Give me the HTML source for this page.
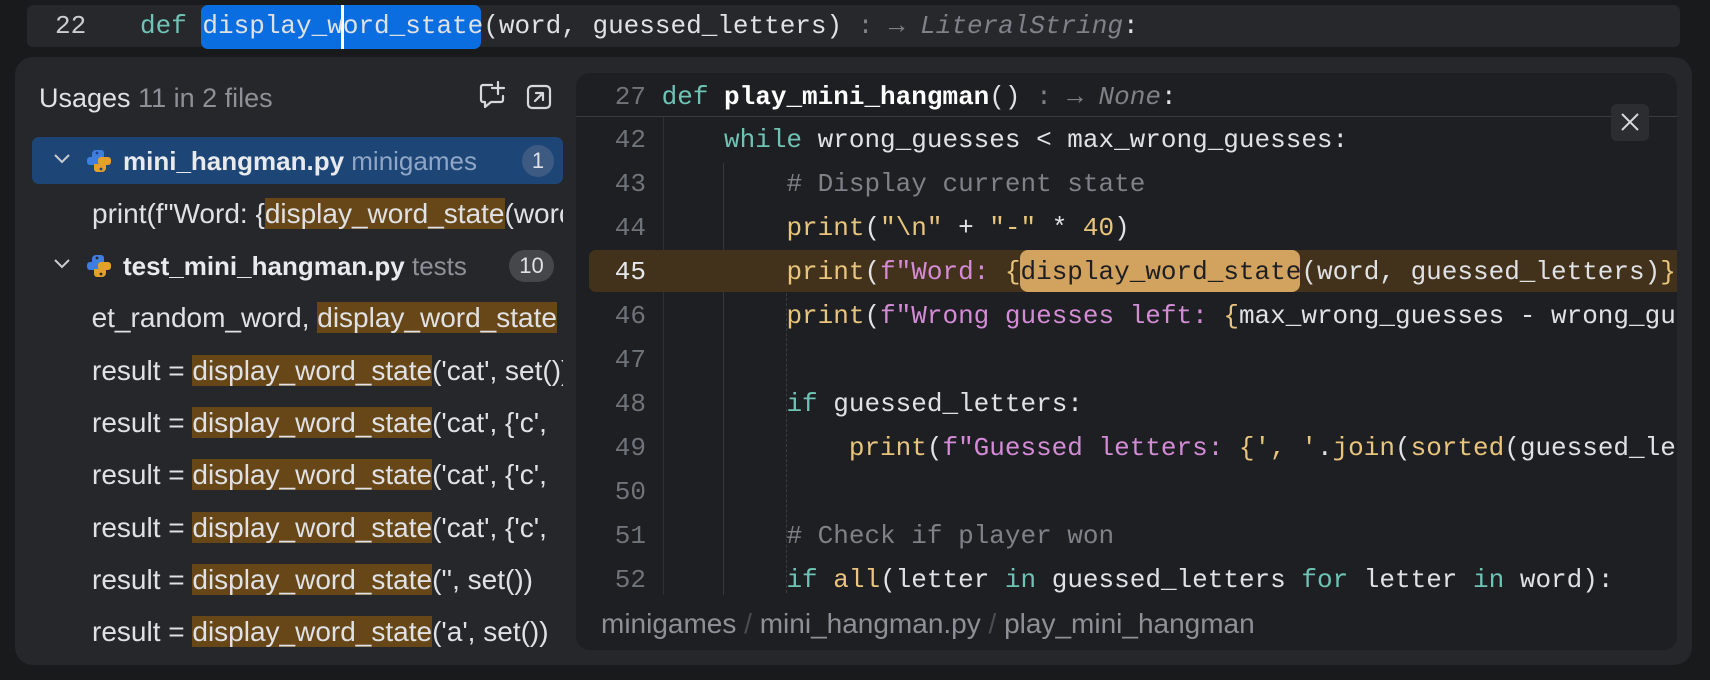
<!DOCTYPE html>
<html><head><meta charset="utf-8"><style>
*{margin:0;padding:0;box-sizing:border-box}
body{width:1710px;height:680px;background:#191a1c;position:relative;overflow:hidden;font-family:"Liberation Sans",sans-serif;color:#dfe1e5}
.a{position:absolute;white-space:pre}
.mono{font-family:"Liberation Mono",monospace;font-size:26px}
.sans{font-family:"Liberation Sans",sans-serif;font-size:28px}
.kw{color:#6fc3b5}.fn{color:#e8c47c}.st{color:#d38bd6}.cm{color:#7e8288}.gr{color:#8b8e94}.num{color:#e8c47c}
.ln{color:#6f737a;display:inline-block;width:70px;text-align:right}
.hl{background:#674718}
.code{white-space:normal}
.code div{white-space:pre;height:44px;line-height:44px}
</style></head><body>
<div class="a" style="left:27px;top:5px;width:1653px;height:42px;background:#26282c;border-radius:6px"></div>
<div class="a mono" style="left:55px;top:10px;line-height:32px;color:#c9ccd1">22</div>
<div class="a" style="left:201px;top:5px;width:280px;height:44px;background:#0b6ee0;border-radius:7px"></div>
<div class="a" style="left:341px;top:5px;width:3px;height:44px;background:#fff"></div>
<div class="a mono" style="left:140px;top:10px;line-height:32px;color:#dfe1e5"><span class="kw">def</span> display_word_state(word, guessed_letters)<span class="cm"> : → <i>LiteralString</i></span>:</div>

<div class="a" style="left:15px;top:57px;width:1677px;height:608px;background:#25272b;border-radius:18px"></div>

<div class="a" style="left:39px;top:82px;line-height:32px;font-size:27px;color:#dfe1e5">Usages <span style="color:#8d9096">11 in 2 files</span></div>
<svg class="a" style="left:478px;top:79px" width="30" height="32" viewBox="0 0 30 32" fill="none" stroke="#d6d8dc" stroke-width="2.2" stroke-linecap="round" stroke-linejoin="round"><path d="M14 6H5a2 2 0 0 0-2 2v13a2 2 0 0 0 2 2h2v5l6-5h10a2 2 0 0 0 2-2v-4"/><path d="M20 3v12M14 9h12"/></svg>
<svg class="a" style="left:526px;top:84px" width="26" height="26" viewBox="0 0 26 26" fill="none" stroke="#d6d8dc" stroke-width="2.2" stroke-linecap="round" stroke-linejoin="round"><rect x="2" y="2" width="22" height="22" rx="4"/><path d="M9 17l8-8M10 9h7v7"/></svg>

<div class="a" style="left:32px;top:137px;width:531px;height:47px;background:#1d4677;border-radius:7px"></div>
<div style="position:absolute;left:0;top:0;width:563px;height:680px;overflow:hidden">
<svg class="a" style="left:52px;top:152px" width="20" height="14" viewBox="0 0 20 14" fill="none" stroke="#c9ccd1" stroke-width="2"><path d="M3 3l7 7 7-7"/></svg>
<svg class="a" style="left:52px;top:257px" width="20" height="14" viewBox="0 0 20 14" fill="none" stroke="#c9ccd1" stroke-width="2"><path d="M3 3l7 7 7-7"/></svg>
<svg class="a" style="left:86px;top:148px" width="26" height="26" viewBox="0 0 26 26"><path d="M6 12V6a4 4 0 0 1 4-4h5a3 3 0 0 1 3 3v6H9a3 3 0 0 0-3 3z" fill="#3d7ee0"/><rect x="1" y="9" width="13" height="8" rx="3" fill="#3d7ee0"/><rect x="12" y="9" width="13" height="8" rx="3" fill="#e4a02a"/><path d="M20 14v6a4 4 0 0 1-4 4h-5a3 3 0 0 1-3-3v-5h9z" fill="#e4a02a"/><circle cx="11" cy="5" r="1.4" fill="#1d4677"/><circle cx="15" cy="21" r="1.4" fill="#1d4677"/></svg>
<svg class="a" style="left:86px;top:253px" width="26" height="26" viewBox="0 0 26 26"><path d="M6 12V6a4 4 0 0 1 4-4h5a3 3 0 0 1 3 3v6H9a3 3 0 0 0-3 3z" fill="#3d7ee0"/><rect x="1" y="9" width="13" height="8" rx="3" fill="#3d7ee0"/><rect x="12" y="9" width="13" height="8" rx="3" fill="#e4a02a"/><path d="M20 14v6a4 4 0 0 1-4 4h-5a3 3 0 0 1-3-3v-5h9z" fill="#e4a02a"/><circle cx="11" cy="5" r="1.4" fill="#25272b"/><circle cx="15" cy="21" r="1.4" fill="#25272b"/></svg>
<div class="a" style="left:123px;top:145px;line-height:32px;font-size:26px;font-weight:bold;color:#e8eaed">mini_hangman.py <span style="font-weight:normal;color:#8fa6c6">minigames</span></div>
<div class="a" style="left:522px;top:145px;width:32px;height:32px;border-radius:16px;background:#3c5a82;color:#dfe1e5;font-size:22px;line-height:32px;text-align:center">1</div>
<div class="a" style="left:123px;top:250px;line-height:32px;font-size:26px;font-weight:bold;color:#e8eaed">test_mini_hangman.py <span style="font-weight:normal;color:#8d9096">tests</span></div>
<div class="a" style="left:509px;top:250px;width:45px;height:32px;border-radius:16px;background:#45474b;color:#dfe1e5;font-size:22px;line-height:32px;text-align:center">10</div>

<div class="a sans" style="left:92px;top:198px;line-height:32px">print(f"Word: {<span class="hl">display_word_state</span>(word, guessed</div>
<div style="position:absolute;left:90px;top:302px;width:500px;height:40px;overflow:hidden"><div class="a sans" style="left:-14px;top:0px;line-height:32px">get_random_word, <span class="hl">display_word_state</span></div></div>
<div class="a sans" style="left:92px;top:355px;line-height:32px">result = <span class="hl">display_word_state</span>('cat', set())</div>
<div class="a sans" style="left:92px;top:407px;line-height:32px">result = <span class="hl">display_word_state</span>('cat', {'c',</div>
<div class="a sans" style="left:92px;top:459px;line-height:32px">result = <span class="hl">display_word_state</span>('cat', {'c',</div>
<div class="a sans" style="left:92px;top:512px;line-height:32px">result = <span class="hl">display_word_state</span>('cat', {'c',</div>
<div class="a sans" style="left:92px;top:564px;line-height:32px">result = <span class="hl">display_word_state</span>('', set())</div>
<div class="a sans" style="left:92px;top:616px;line-height:32px">result = <span class="hl">display_word_state</span>('a', set())</div>
</div>

<div class="a" style="left:576px;top:73px;width:1101px;height:577px;background:#1e1f22;border-radius:14px;overflow:hidden">
<div class="a" style="left:0;top:43px;width:1101px;height:1px;background:#393b40"></div>
<div class="a" style="left:87px;top:44px;width:1px;height:480px;background:#2f3034"></div>
<div class="a" style="left:147px;top:90px;width:1px;height:434px;background:#34363a"></div>
<div class="a" style="left:210px;top:220px;width:0;height:300px;border-left:1px dashed #3a3c40"></div>
<div class="a" style="left:13px;top:177px;width:1100px;height:42px;background:#43321b;border-radius:7px 0 0 7px"></div>
<div class="a" style="left:444px;top:177px;width:280px;height:42px;background:#d2a25f;border-radius:8px"></div>
<div class="a mono code" style="left:0;top:2px"><div><span class="ln">27</span> <span class="kw">def</span> <b style="color:#fff">play_mini_hangman</b>()<span class="cm"> : → <i>None</i></span>:</div></div>
<div class="a mono code" style="left:0;top:45px"><div><span class="ln">42</span>     <span class="kw">while</span> wrong_guesses &lt; max_wrong_guesses:</div><div><span class="ln">43</span>         <span class="cm"># Display current state</span></div><div><span class="ln">44</span>         <span class="fn">print</span>(<span class="num">"\n"</span> + <span class="num">"-"</span> * <span class="num">40</span>)</div><div><span class="ln" style="color:#e6e7ea">45</span>         <span class="fn">print</span>(<span class="st">f"Word: </span><span class="num">{</span><span style="color:#1e1f22">display_word_state</span>(word, guessed_letters)<span class="num">}</span></div><div><span class="ln">46</span>         <span class="fn">print</span>(<span class="st">f"Wrong guesses left: </span><span class="num">{</span>max_wrong_guesses - wrong_guesses</div><div><span class="ln">47</span></div><div><span class="ln">48</span>         <span class="kw">if</span> guessed_letters:</div><div><span class="ln">49</span>             <span class="fn">print</span>(<span class="st">f"Guessed letters: </span><span class="num">{</span><span class="num">', '</span>.<span class="fn">join</span>(<span class="fn">sorted</span>(guessed_letters</div><div><span class="ln">50</span></div><div><span class="ln">51</span>         <span class="cm"># Check if player won</span></div><div><span class="ln">52</span>         <span class="kw">if</span> <span class="fn">all</span>(letter <span class="kw">in</span> guessed_letters <span class="kw">for</span> letter <span class="kw">in</span> word):</div></div>
<div class="a" style="left:0;top:522px;width:1101px;height:60px;background:#1e1f22"></div>
<div class="a" style="left:25px;top:535px;line-height:32px;font-size:28px;color:#8d9096">minigames <span style="color:#4a4c50">/</span> mini_hangman.py <span style="color:#4a4c50">/</span> play_mini_hangman</div>
<div class="a" style="left:1035px;top:31px;width:38px;height:37px;background:#2b2d30;border-radius:6px"></div>
<svg class="a" style="left:1043px;top:38px" width="22" height="22" viewBox="0 0 22 22" stroke="#d6d8dc" stroke-width="2"><path d="M3 3l16 16M19 3L3 19"/></svg>
</div>
</body></html>
